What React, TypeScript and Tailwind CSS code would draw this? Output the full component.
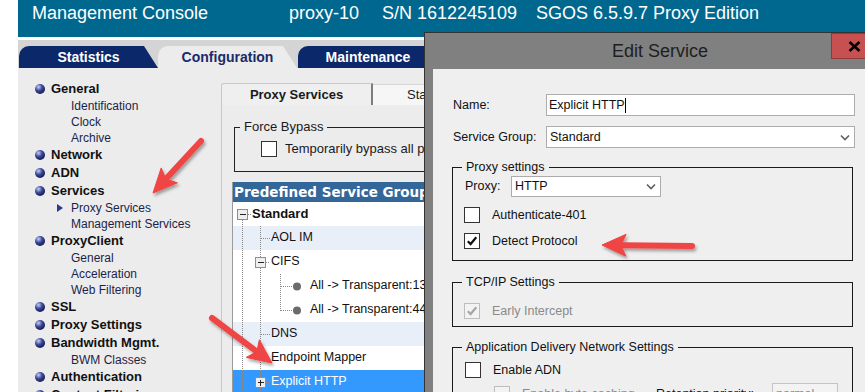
import React from "react";

type NavItem = { t: string; c?: boolean; active?: boolean };

const nav: NavItem[] = [
  { t: "General", c: true },
  { t: "Identification" },
  { t: "Clock" },
  { t: "Archive" },
  { t: "Network", c: true },
  { t: "ADN", c: true },
  { t: "Services", c: true },
  { t: "Proxy Services", active: true },
  { t: "Management Services" },
  { t: "ProxyClient", c: true },
  { t: "General" },
  { t: "Acceleration" },
  { t: "Web Filtering" },
  { t: "SSL", c: true },
  { t: "Proxy Settings", c: true },
  { t: "Bandwidth Mgmt.", c: true },
  { t: "BWM Classes" },
  { t: "Authentication", c: true },
  { t: "Content Filtering", c: true },
];

function Header() {
  return (
    <div className="h-[37px] bg-[#00688f] flex items-start pt-[2px] pl-[14px] text-white text-[18px] leading-[22px] whitespace-nowrap shrink-0">
      <span className="w-[257px] shrink-0">Management Console</span>
      <span className="w-[93px] shrink-0">proxy-10</span>
      <span className="w-[154px] shrink-0">S/N 1612245109</span>
      <span>SGOS 6.5.9.7 Proxy Edition</span>
    </div>
  );
}

function Tabs() {
  return (
    <div className="h-[28px] bg-[#d4d4d4] flex items-end pl-[1px] text-[14px] font-bold shrink-0">
      <div className="w-[139px] h-[22px] rounded-tl-[10px] bg-[#0b286a] text-white flex items-center justify-center [clip-path:polygon(0_0,125px_0,139px_100%,0_100%)]">
        Statistics
      </div>
      <div className="w-[139px] h-[22px] rounded-tl-[10px] bg-[#ececec] text-[#1a2a6b] flex items-center justify-center [clip-path:polygon(0_0,125px_0,139px_100%,0_100%)]">
        Configuration
      </div>
      <div className="ml-[1px] w-[140px] h-[22px] rounded-t-[10px] bg-[#0b286a] text-white flex items-center justify-center">
        Maintenance
      </div>
    </div>
  );
}

function Nav() {
  return (
    <div className="w-[203px] shrink-0 pt-[12px] flex flex-col whitespace-nowrap">
      {nav.map((n, i) =>
        n.c ? (
          <div key={i} className="h-[18px] flex items-center pl-[17px] gap-[6px] text-[13px] font-bold text-[#111]">
            <span className="w-[10px] h-[10px] rounded-full shrink-0 bg-[radial-gradient(circle_at_35%_30%,#c8d0f4_0%,#3c4a9a_38%,#0d1445_80%)]" />
            <span>{n.t}</span>
          </div>
        ) : n.active ? (
          <div key={i} className="h-[16px] flex items-center pl-[39px] text-[12px] text-[#1c1f4a]">
            <span className="w-0 h-0 border-y-[4px] border-y-transparent border-l-[6px] border-l-[#2b3a8c]" />
            <span className="ml-[8px]">{n.t}</span>
          </div>
        ) : (
          <div key={i} className="h-[16px] flex items-center pl-[53px] text-[12px] text-[#1c1f4a]">
            {n.t}
          </div>
        )
      )}
    </div>
  );
}

const DOT = "#8a8a8a";

function V({ x, y1 = 0, y2 = 24 }: { x: number; y1?: number; y2?: number }) {
  return <line x1={x} y1={y1} x2={x} y2={y2} stroke={DOT} strokeWidth={1} strokeDasharray="1 1" shapeRendering="crispEdges" />;
}
function H({ x1, x2, y = 12.5 }: { x1: number; x2: number; y?: number }) {
  return <line x1={x1} y1={y} x2={x2} y2={y} stroke={DOT} strokeWidth={1} strokeDasharray="1 1" shapeRendering="crispEdges" />;
}
function Box({ x, plus }: { x: number; plus?: boolean }) {
  return (
    <g shapeRendering="crispEdges">
      <rect x={x} y={7.5} width={10} height={10} fill="#eeeeee" stroke="#8e8e8e" />
      <line x1={x + 2.5} y1={12.5} x2={x + 8} y2={12.5} stroke="#222" />
      {plus && <line x1={x + 5} y1={10} x2={x + 5} y2={15.5} stroke="#222" />}
    </g>
  );
}
function Dot({ x }: { x: number }) {
  return <circle cx={x} cy={12.5} r={4} fill="#6b6b6b" />;
}

function Tree() {
  const rows: { bg: string; w: number; g: React.ReactNode; text: string; cls: string }[] = [
    {
      bg: "bg-white",
      w: 19,
      text: "Standard",
      cls: "font-bold text-[13px] text-[#111]",
      g: (
        <>
          <V x={9.5} y1={17.5} y2={24} />
          <H x1={14.5} x2={19} />
          <Box x={4.5} />
        </>
      ),
    },
    {
      bg: "bg-[#e9eff9]",
      w: 38,
      text: "AOL IM",
      cls: "text-[12.5px] text-[#111]",
      g: (
        <>
          <V x={9.5} />
          <V x={27.5} />
          <H x1={27.5} x2={37} />
        </>
      ),
    },
    {
      bg: "bg-white",
      w: 38,
      text: "CIFS",
      cls: "text-[12.5px] text-[#111]",
      g: (
        <>
          <V x={9.5} />
          <V x={27.5} y1={0} y2={7.5} />
          <V x={27.5} y1={17.5} y2={24} />
          <H x1={32.5} x2={37} />
          <Box x={22.5} />
        </>
      ),
    },
    {
      bg: "bg-white",
      w: 77,
      text: "All -> Transparent:139",
      cls: "text-[12.5px] text-[#111]",
      g: (
        <>
          <V x={9.5} />
          <V x={27.5} />
          <V x={47.5} />
          <H x1={47.5} x2={59} />
          <Dot x={64} />
        </>
      ),
    },
    {
      bg: "bg-white",
      w: 77,
      text: "All -> Transparent:445",
      cls: "text-[12.5px] text-[#111]",
      g: (
        <>
          <V x={9.5} />
          <V x={27.5} />
          <V x={47.5} y1={0} y2={12.5} />
          <H x1={47.5} x2={59} />
          <Dot x={64} />
        </>
      ),
    },
    {
      bg: "bg-[#e9eff9]",
      w: 38,
      text: "DNS",
      cls: "text-[12.5px] text-[#111]",
      g: (
        <>
          <V x={9.5} />
          <V x={27.5} />
          <H x1={27.5} x2={37} />
        </>
      ),
    },
    {
      bg: "bg-white",
      w: 38,
      text: "Endpoint Mapper",
      cls: "text-[12.5px] text-[#111]",
      g: (
        <>
          <V x={9.5} />
          <V x={27.5} />
          <H x1={27.5} x2={37} />
        </>
      ),
    },
    {
      bg: "bg-[#3399ff]",
      w: 38,
      text: "Explicit HTTP",
      cls: "text-[12.5px] text-white",
      g: (
        <>
          <V x={9.5} />
          <V x={27.5} y1={0} y2={7.5} />
          <V x={27.5} y1={17.5} y2={24} />
          <H x1={32.5} x2={37} />
          <Box x={22.5} plus />
        </>
      ),
    },
  ];
  return (
    <div className="mt-[10px] ml-[-2px] w-[420px] border-l border-[#9a9a9a] bg-white flex flex-col">
      <div className="h-[20px] bg-[#336699] text-white font-['DejaVu_Sans',Verdana,sans-serif] font-bold text-[13.5px] leading-[20px] pl-[1px] whitespace-nowrap">
        Predefined Service Groups
      </div>
      {rows.map((r, i) => (
        <div key={i} className={`h-[24px] flex items-center whitespace-nowrap ${r.bg}`}>
          <svg width={r.w} height={24} className="shrink-0">
            {r.g}
          </svg>
          <span className={r.cls}>{r.text}</span>
        </div>
      ))}
    </div>
  );
}

function Check({ checked, disabled }: { checked?: boolean; disabled?: boolean }) {
  return (
    <div
      className={
        disabled
          ? "w-[16px] h-[16px] shrink-0 border border-[#bdbdbd] bg-[#f3f3f3] flex items-center justify-center"
          : "w-[16px] h-[16px] shrink-0 border border-[#333] bg-white flex items-center justify-center"
      }
    >
      {checked && (
        <svg width="12" height="12" viewBox="0 0 12 12">
          <path d="M1.8 6.2 L4.6 9 L10.3 2.2" fill="none" stroke={disabled ? "#a6a6a6" : "#111"} strokeWidth="2.2" />
        </svg>
      )}
    </div>
  );
}

function Chevron({ color = "#5f5f5f" }: { color?: string }) {
  return (
    <svg width="10" height="7" viewBox="0 0 10 7" className="shrink-0">
      <polyline points="1,1.5 5,5.5 9,1.5" fill="none" stroke={color} strokeWidth="1.6" />
    </svg>
  );
}

function RightPanel() {
  return (
    <div className="flex-1 pt-[15px] flex flex-col min-w-0">
      <div className="flex h-[22px] shrink-0">
        <div className="w-[152px] border-l border-t border-[#c9c9c9] rounded-tl-[3px] border-r-2 border-r-[#7d7d7d] bg-[#efefef] flex items-center justify-center font-bold text-[13px] text-[#1a1a1a]">
          Proxy Services
        </div>
        <div className="mt-[1px] bg-[#f6f6f6] border-t border-[#d6d6d6] pl-[34px] pr-4 flex items-center text-[13px] text-[#1a1a1a] whitespace-nowrap">
          Static Bypass List
        </div>
      </div>
      <div className="flex-1 border-l border-[#c9c9c9] pl-[12px] pt-[14px] flex flex-col">
        <fieldset className="w-[400px] border border-[#222]">
          <legend className="ml-[5px] px-[4px] text-[13px] leading-[16px] text-[#1a1a1a]">Force Bypass</legend>
          <div className="pl-[26px] pt-[4px] pb-[12px] flex items-center gap-[8px] whitespace-nowrap">
            <Check />
            <span className="text-[13px] text-[#1a1a1a]">Temporarily bypass all proxy services</span>
          </div>
        </fieldset>
        <Tree />
      </div>
    </div>
  );
}

function Dialog() {
  return (
    <div className="absolute left-[424px] top-[32px] w-[453px] h-[370px] bg-[#808080] border-l border-t border-[#333] flex flex-col text-[12.5px] text-[#111] whitespace-nowrap">
      <div className="h-[36px] flex shrink-0">
        <div className="w-[187px] shrink-0" />
        <div className="self-center text-[18px] leading-[22px] text-[#1e1e1e]">Edit Service</div>
        <div className="ml-auto w-[46px] h-[26px] bg-[#c75050] border border-[#8f3a3a] flex items-center justify-center">
          <svg width="13" height="11" viewBox="0 0 13 11">
            <path d="M1.5 1 L11.5 10 M11.5 1 L1.5 10" stroke="#000" strokeWidth="2.6" />
          </svg>
        </div>
      </div>
      <div className="ml-[8px] flex-1 bg-[#efefef] pl-[19px] pt-[25px] flex flex-col">
        <div className="flex items-center h-[22px]">
          <span className="w-[94px] pl-[1px] shrink-0">Name:</span>
          <div className="w-[309px] h-[22px] bg-white border border-[#acacac] flex items-center pl-[2px]">
            <span>Explicit HTTP</span>
            <span className="w-px h-[15px] bg-black" />
          </div>
        </div>
        <div className="mt-[10px] flex items-center h-[22px]">
          <span className="w-[94px] pl-[1px] shrink-0">Service Group:</span>
          <div className="w-[309px] h-[22px] bg-white border border-[#acacac] flex items-center pl-[3px] pr-[4px]">
            <span className="flex-1">Standard</span>
            <Chevron />
          </div>
        </div>

        <fieldset className="mt-[11px] w-[401px] border border-[#1a1a1a]">
          <legend className="ml-[9px] px-[4px] leading-[16px]">Proxy settings</legend>
          <div className="pl-[12px] pb-[11px] flex flex-col">
            <div className="mt-[1px] flex items-center h-[21px]">
              <span className="w-[46px] shrink-0">Proxy:</span>
              <div className="w-[150px] h-[21px] bg-white border border-[#acacac] flex items-center pl-[3px] pr-[4px]">
                <span className="flex-1">HTTP</span>
                <Chevron />
              </div>
            </div>
            <div className="mt-[10px] ml-[-1px] flex items-center gap-[12px] h-[16px]">
              <Check />
              <span>Authenticate-401</span>
            </div>
            <div className="mt-[10px] ml-[-1px] flex items-center gap-[12px] h-[16px]">
              <Check checked />
              <span>Detect Protocol</span>
            </div>
          </div>
        </fieldset>

        <fieldset className="mt-[13px] w-[401px] border border-[#1a1a1a]">
          <legend className="ml-[9px] px-[4px] leading-[16px]">TCP/IP Settings</legend>
          <div className="pl-[11px] pb-[7px] flex flex-col">
            <div className="mt-[13px] flex items-center gap-[12px] h-[16px]">
              <Check checked disabled />
              <span className="text-[#8a8a8a]">Early Intercept</span>
            </div>
          </div>
        </fieldset>

        <fieldset className="mt-[12px] w-[401px] border border-[#1a1a1a]">
          <legend className="ml-[9px] px-[4px] leading-[16px]">Application Delivery Network Settings</legend>
          <div className="pl-[12px] pb-[8px] flex flex-col">
            <div className="mt-[7px] flex items-center gap-[12px] h-[16px]">
              <Check />
              <span>Enable ADN</span>
            </div>
            <div className="mt-[5px] flex items-center h-[22px] pl-[29px]">
              <Check disabled />
              <span className="ml-[12px] w-[134px] text-[#8a8a8a]">Enable byte caching</span>
              <span className="w-[116px]">Retention priority:</span>
              <div className="w-[66px] h-[22px] bg-[#f3f3f3] border border-[#c4c4c4] flex items-center pl-[3px] pr-[4px]">
                <span className="flex-1 text-[#8a8a8a]">normal</span>
                <Chevron color="#b0b0b0" />
              </div>
            </div>
          </div>
        </fieldset>
      </div>
    </div>
  );
}

function Arrow({ x1, y1, x2, y2 }: { x1: number; y1: number; x2: number; y2: number }) {
  const dx = x2 - x1;
  const dy = y2 - y1;
  const L = Math.hypot(dx, dy);
  const ux = dx / L;
  const uy = dy / L;
  const px = -uy;
  const py = ux;
  const hl = 24;
  const hw = 11;
  const bx = x2 - ux * hl;
  const by = y2 - uy * hl;
  const nx = bx + ux * 5;
  const ny = by + uy * 5;
  return (
    <g>
      <line x1={x1} y1={y1} x2={bx + ux * 3} y2={by + uy * 3} stroke="#ef4444" strokeWidth={6} strokeLinecap="round" />
      <polygon
        points={`${x2},${y2} ${bx + px * hw},${by + py * hw} ${nx},${ny} ${bx - px * hw},${by - py * hw}`}
        fill="#ef4444"
        stroke="#ef4444"
        strokeWidth={1}
        strokeLinejoin="round"
      />
    </g>
  );
}

function Arrows() {
  return (
    <svg className="absolute left-0 top-0 pointer-events-none" width={865} height={392}>
      <defs>
        <filter id="ash" x="-30%" y="-30%" width="160%" height="160%">
          <feDropShadow dx="1.5" dy="2.5" stdDeviation="1.6" floodColor="#000" floodOpacity="0.35" />
        </filter>
      </defs>
      <g filter="url(#ash)">
        <Arrow x1={201} y1={141} x2={153} y2={193} />
        <Arrow x1={212} y1={318} x2={272} y2={363} />
        <Arrow x1={692} y1={246} x2={602} y2={245} />
      </g>
    </svg>
  );
}

export default function App() {
  return (
    <div className="relative w-[865px] h-[392px] overflow-hidden bg-white flex font-['Liberation_Sans',Arial,sans-serif]">
      <div className="w-[18px] shrink-0" />
      <div className="w-[847px] shrink-0 flex flex-col">
        <Header />
        <div className="h-[3px] bg-white shrink-0" />
        <Tabs />
        <div className="h-[324px] bg-[#ececec] flex shrink-0">
          <Nav />
          <RightPanel />
        </div>
      </div>
      <Dialog />
      <Arrows />
    </div>
  );
}
